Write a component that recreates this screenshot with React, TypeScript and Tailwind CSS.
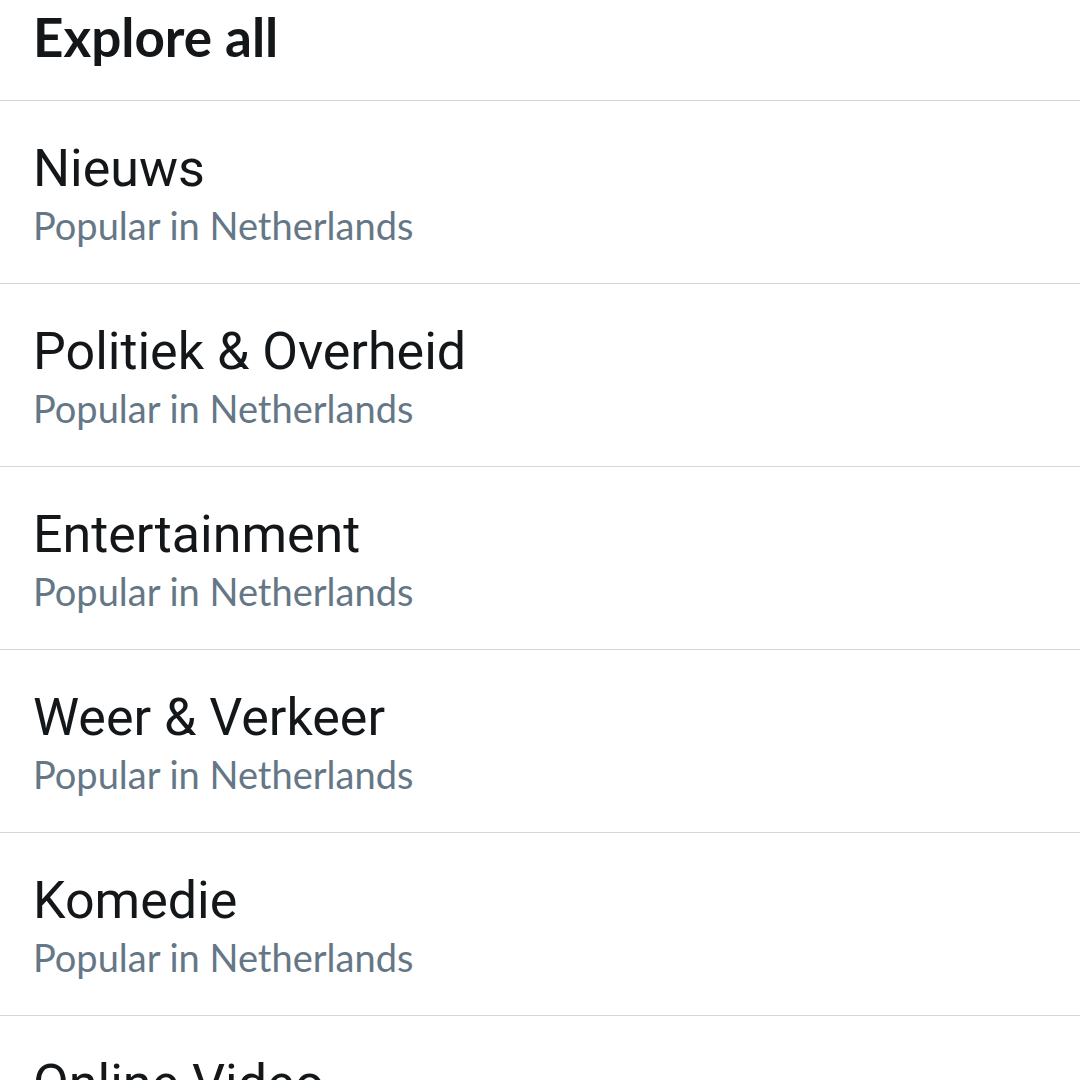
import React from 'react';

// Explore all — category list

const categories = [
  'Nieuws',
  'Politiek & Overheid',
  'Entertainment',
  'Weer & Verkeer',
  'Komedie',
  'Online Video',
];

const CategoryRow: React.FC<{ name: string }> = ({ name }) => (
  <div className="border-b border-[#d6d6d6] pl-[33px] pr-6 pt-[36px] pb-[35px]">
    <div
      className="text-[52px] leading-[64px] text-[#14171a]"
      style={{ fontFamily: 'Roboto, "Noto Sans", sans-serif' }}
    >
      {name}
    </div>
    <div className="mt-[1px] text-[38px] leading-[46px] text-[#657786]">
      Popular in Netherlands
    </div>
  </div>
);

export default function App() {
  return (
    <div
      className="h-[1080px] w-[1080px] overflow-hidden bg-white"
      style={{ fontFamily: 'Lato, "Noto Sans", sans-serif' }}
    >
      {/* Header */}
      <div className="border-b border-[#d6d6d6] pl-[33px] pt-[7px] pb-[33px]">
        <h1 className="text-[53px] font-bold leading-[60px] text-[#14171a]">Explore all</h1>
      </div>

      {/* List */}
      {categories.map((c) => (
        <CategoryRow key={c} name={c} />
      ))}
    </div>
  );
}
